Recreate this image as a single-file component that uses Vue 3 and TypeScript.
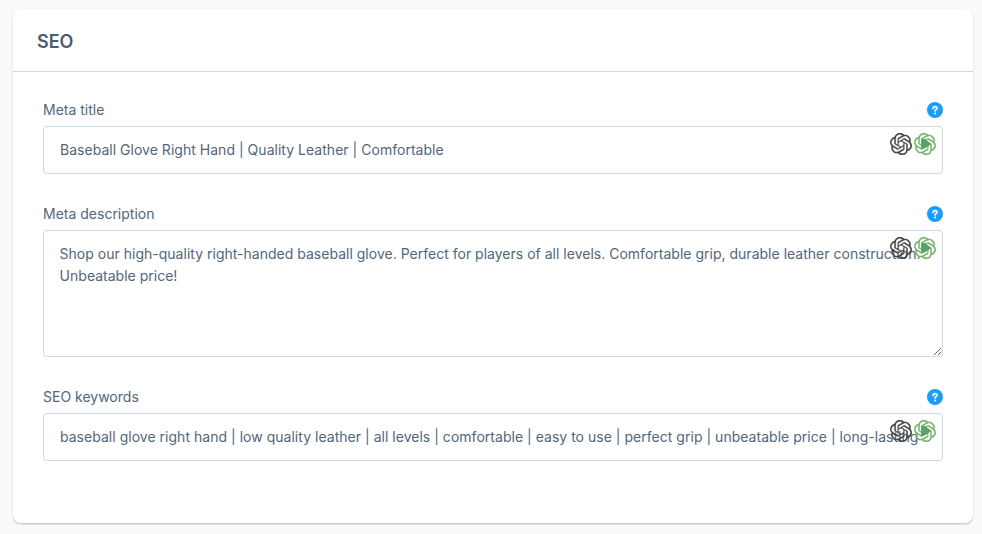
<script setup lang="ts">
import { ref } from 'vue'

interface Field {
  id: string
  label: string
  multiline: boolean
  value: string
}

const fields = ref<Field[]>([
  {
    id: 'meta-title',
    label: 'Meta title',
    multiline: false,
    value: 'Baseball Glove Right Hand | Quality Leather | Comfortable',
  },
  {
    id: 'meta-description',
    label: 'Meta description',
    multiline: true,
    value:
      'Shop our high-quality right-handed baseball glove. Perfect for players of all levels. Comfortable grip, durable leather construction. Unbeatable price!',
  },
  {
    id: 'seo-keywords',
    label: 'SEO keywords',
    multiline: false,
    value:
      'baseball glove right hand | low quality leather | all levels | comfortable | easy to use | perfect grip | unbeatable price | long-lasting',
  },
])

const knot =
  'M22.2819 9.8211a5.9847 5.9847 0 0 0-.5157-4.9108 6.0462 6.0462 0 0 0-6.5098-2.9A6.0651 6.0651 0 0 0 4.9807 4.1818a5.9847 5.9847 0 0 0-3.9977 2.9 6.0462 6.0462 0 0 0 .7427 7.0966 5.98 5.98 0 0 0 .511 4.9107 6.051 6.051 0 0 0 6.5146 2.9001A5.9847 5.9847 0 0 0 13.2599 24a6.0557 6.0557 0 0 0 5.7718-4.2058 5.9894 5.9894 0 0 0 3.9977-2.9001 6.0557 6.0557 0 0 0-.7475-7.0729zm-9.022 12.6081a4.4755 4.4755 0 0 1-2.8764-1.0408l.1419-.0804 4.7783-2.7582a.7948.7948 0 0 0 .3927-.6813v-6.7369l2.02 1.1686a.071.071 0 0 1 .038.052v5.5826a4.504 4.504 0 0 1-4.4945 4.4944zm-9.6607-4.1254a4.4708 4.4708 0 0 1-.5346-3.0137l.142.0852 4.783 2.7582a.7712.7712 0 0 0 .7806 0l5.8428-3.3685v2.3324a.0804.0804 0 0 1-.0332.0615L9.74 19.9502a4.4992 4.4992 0 0 1-6.1408-1.6464zM2.3408 7.8956a4.485 4.485 0 0 1 2.3655-1.9728V11.6a.7664.7664 0 0 0 .3879.6765l5.8144 3.3543-2.0201 1.1685a.0757.0757 0 0 1-.071 0l-4.8303-2.7865A4.504 4.504 0 0 1 2.3408 7.872zm16.5963 3.8558L13.1038 8.364 15.1192 7.2a.0757.0757 0 0 1 .071 0l4.8303 2.7913a4.4944 4.4944 0 0 1-.6765 8.1042v-5.6772a.79.79 0 0 0-.407-.667zm2.0107-3.0231l-.142-.0852-4.7735-2.7818a.7759.7759 0 0 0-.7854 0L9.409 9.2297V6.8974a.0662.0662 0 0 1 .0284-.0615l4.8303-2.7866a4.4992 4.4992 0 0 1 6.6802 4.66zM8.3065 12.863l-2.02-1.1638a.0804.0804 0 0 1-.038-.0567V6.0742a4.4992 4.4992 0 0 1 7.3757-3.4537l-.142.0805L8.704 5.459a.7948.7948 0 0 0-.3927.6813zm1.0976-2.3654l2.602-1.4998 2.6069 1.4998v2.9994l-2.5974 1.4997-2.6067-1.4997Z'
</script>

<template>
  <main class="page">
    <section class="card">
      <header class="card-header">
        <h2 class="card-title">SEO</h2>
      </header>
      <form class="card-content">
        <div v-for="field in fields" :key="field.id" class="field">
          <div class="field-head">
            <label class="field-label" :for="field.id">{{ field.label }}</label>
            <svg class="help" viewBox="0 0 16 16">
              <circle cx="8" cy="8" r="8" fill="#189eff" />
              <path
                d="M6.1 6.4C6.1 5.2 6.9 4.6 8 4.6s2 .7 2 1.7C10 7.5 8.1 7.6 8.1 9"
                fill="none"
                stroke="#fff"
                stroke-width="1.7"
                stroke-linecap="round"
              />
              <circle cx="8.1" cy="11.5" r="1" fill="#fff" />
            </svg>
          </div>
          <div class="control">
            <textarea
              v-if="field.multiline"
              :id="field.id"
              v-model="field.value"
              class="box area"
              spellcheck="false"
            ></textarea>
            <input v-else :id="field.id" v-model="field.value" class="box line" type="text" />
            <div class="actions">
              <svg class="action" viewBox="0 0 24 24">
                <path :d="knot" fill="#444" stroke="#444" stroke-width=".2" />
              </svg>
              <svg class="action" viewBox="0 0 24 24">
                <path :d="knot" fill="#74b566" stroke="#74b566" stroke-width=".2" />
                <path d="M7.8 6.4 12.6 6.9 18.8 12 13 16.2 7.8 18z" fill="#56a06c" />
              </svg>
            </div>
          </div>
        </div>
      </form>
    </section>
  </main>
</template>

<style>
body {
  margin: 0;
  background: #f9fafb;
}
</style>

<style scoped>
.page {
  box-sizing: border-box;
  height: 534px;
  padding: 9px 9px 11px 13px;
  font-family: Inter, 'Liberation Sans', sans-serif;
  font-size: 14px;
  color: #52667a;
}

.card {
  box-sizing: border-box;
  width: 960px;
  height: 514px;
  background: #fff;
  border-radius: 8px;
  box-shadow:
    0 1px 1px rgba(0, 0, 0, 0.08),
    0 2px 1px rgba(0, 0, 0, 0.06),
    0 1px 3px rgba(0, 0, 0, 0.1);
}

.card-header {
  box-sizing: border-box;
  display: flex;
  align-items: center;
  height: 63px;
  padding: 3px 24px 0;
  border-bottom: 1px solid #d1d9e0;
}

.card-title {
  margin: 0;
  font-size: 18px;
  font-weight: 600;
  line-height: 24px;
  color: #4a5b6e;
}

.card-content {
  display: flex;
  flex-direction: column;
  gap: 32px;
  padding: 30px;
}

.field-head {
  display: flex;
  align-items: center;
  justify-content: space-between;
  height: 16px;
  margin-bottom: 8px;
}

.field-label {
  line-height: 16px;
}

.help {
  display: block;
  width: 16px;
  height: 16px;
}

.control {
  position: relative;
}

.box {
  box-sizing: border-box;
  display: block;
  width: 100%;
  margin: 0;
  border: 1px solid #d1d9e0;
  border-radius: 4px;
  outline: none;
  background: #fff;
  font: inherit;
  line-height: 22px;
  color: inherit;
}

.line {
  height: 48px;
  padding: 11px 16px 13px;
  letter-spacing: 0.024px;
}

.area {
  height: 127px;
  padding: 12px 16px 12px 15.6px;
  letter-spacing: 0.01px;
  resize: vertical;
}

.actions {
  position: absolute;
  top: 7px;
  right: 7px;
  display: flex;
  gap: 2px;
  pointer-events: none;
}

.action {
  display: block;
  width: 22px;
  height: 22px;
}
</style>
